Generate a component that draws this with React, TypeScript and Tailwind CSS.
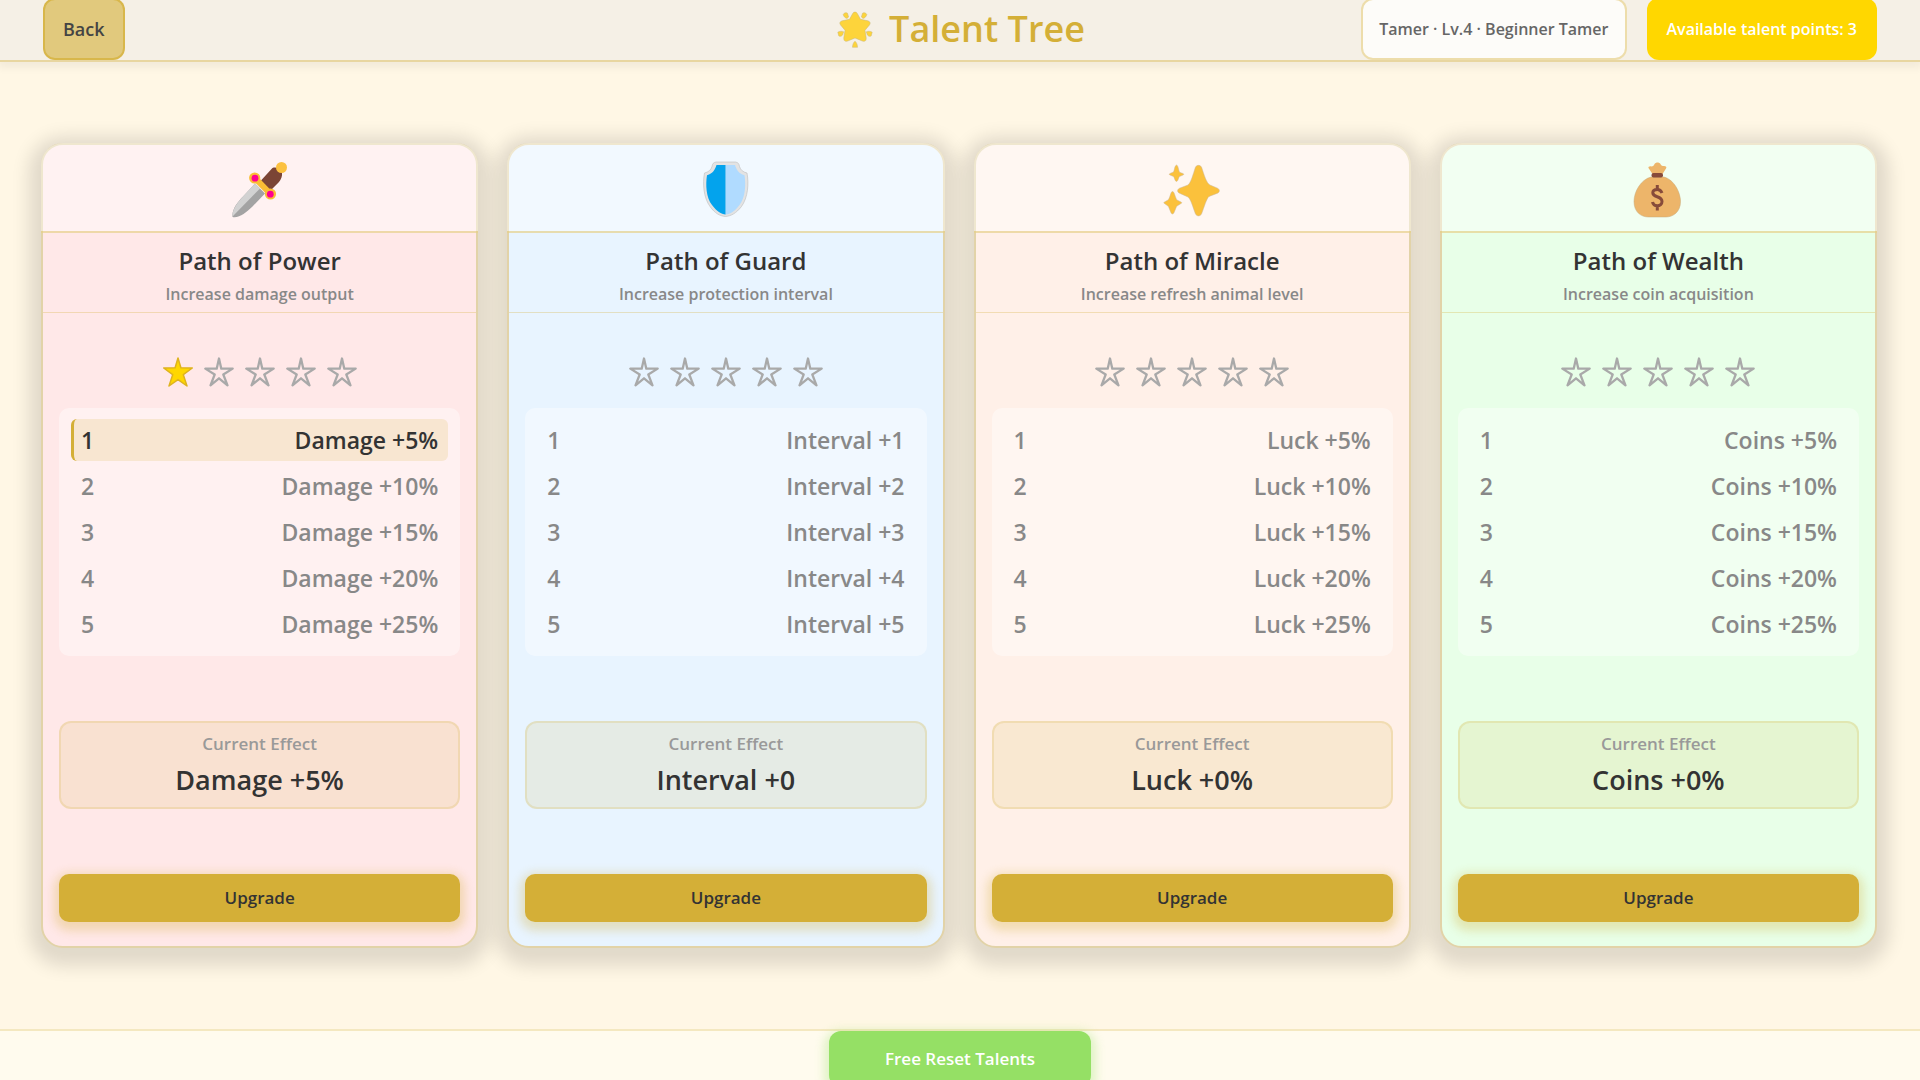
import type { ReactNode } from "react";

type Path = {
  name: string;
  desc: string;
  color: string;
  icon: ReactNode;
  level: number;
  levels: string[];
  effect: string;
};

const DaggerIcon = () => (
  <svg viewBox="1 -1 100 85" className="w-[100px] h-[86px]" aria-hidden="true">
    <path d="M23.500 71.500C22.500 64 29 56 34 51L46 38L56 48L43.500 61C37 67 30 73 23.500 71.500Z" fill="#a3a3a3" />
    <path d="M23.500 71C23 64 29 56.500 34 51L46 38L51 43Z" fill="#d2d2d2" />
    <path d="M52 35L62.500 23.500C65 20.500 71 22.500 73 27C73.500 31 72 34 70 36.500L60 46.500Z" fill="#7b4535" />
    <path d="M46 32.500L61.500 48.500" stroke="#f9bd35" strokeWidth="6" />
    <circle cx="45.700" cy="32.500" r="5.600" fill="#f9bd35" />
    <circle cx="61.500" cy="48.500" r="5.600" fill="#f9bd35" />
    <circle cx="46" cy="32.700" r="3.400" fill="#ff0090" />
    <circle cx="61.300" cy="48.700" r="3.400" fill="#ff0090" />
    <circle cx="72.500" cy="22" r="5.500" fill="#fcc140" />
  </svg>
);

const ShieldIcon = () => (
  <svg viewBox="-3 -1 100 85" className="w-[100px] h-[86px]" aria-hidden="true">
    <path
      d="M37 16.500H56.500C59 17 60 18 60.500 21C61.500 24.500 64 26.500 68 27.500C70 38 69 52 62.500 61C57 68 52 70.500 46.500 71C41 70.500 36 68 31 61C24.500 52 23.500 38 25.500 27.500C29.500 26.500 32 24.500 33 21C33.500 18 34.500 17 37 16.500Z"
      fill="#e3e3e3"
      stroke="#bdbdbd"
      strokeWidth=".6"
    />
    <path d="M46.700 19.500H37.500C36 24 34 28 28 29.800C26.500 39 27 52 33 59.500C38 66 42 68.500 46.700 69Z" fill="#03a3ed" />
    <path d="M46.700 19.500H56C57.500 24 59.500 28 65.500 29.800C67 39 66.500 52 60.500 59.500C55.500 66 51.500 68.500 46.700 69Z" fill="#b0dbff" />
  </svg>
);

const SparklesIcon = () => (
  <svg viewBox="3 -1 100 85" className="w-[100px] h-[86px]" fill="#fbc13c" stroke="#c9b79a" strokeWidth=".5" aria-hidden="true">
    <path d="M56.500 21.500C58 19.300 61 19.300 62.500 21.500C65 29 67.500 38 71 39.500L78.500 42.700C81 44 81 46.500 78.500 47.700L70 51C67.500 53 65 62 62.500 68.500C61 71 58 71 56.500 68.500C54 62 52 54 49 51.500L40.500 47.700C38 46.500 38 44 40.500 42.700L49 39.500C52 37 54 29 56.500 21.500Z" />
    <path d="M37.500 19.500C39.500 20 39.500 26 41 27L44 28C45 28.500 45 29 44 29.500L40.500 31C39.500 32 39 36 37.500 36C36 36 35.500 32 34.500 31L31 29.500C30 29 30 28.500 31 28L34.500 26.500C35.500 25 35.500 20 37.500 19.500Z" />
    <path d="M33.500 46C35.500 46 36.500 53 38 54.500L42 56.500C43 57 43 57.500 42 58L38 60.500C36.500 62 35.500 68.500 33.500 68.500C31.500 68.500 30.500 62 29 60.500L25.500 58C24.500 57.500 24.500 57 25.500 56.500L29 54.500C31 53 31.500 46 33.500 46Z" />
  </svg>
);

const MoneyBagIcon = () => (
  <svg viewBox="-1 -1 100 85" className="w-[100px] h-[86px]" aria-hidden="true">
    <path d="M43.500 28.500L39.500 22.500C39 21.500 40.500 20.500 42.500 21C44 21 45 20 45.500 18.500C47 16.500 50 16.500 51.500 18.500C52 20 53 20.500 55 20.500C57 20.500 58 21.500 57 23L53.500 28.500Z" fill="#edb56a" />
    <path d="M42 31.500H55C65 34 71.500 47 71.500 56C71.500 66.500 64 71.500 57 71.500H39.500C32 71.500 25 66.500 25 56C25 46 32 34 42 31.500Z" fill="#edb56a" stroke="#c6a878" strokeWidth=".5" />
    <rect x="42.500" y="27.500" width="11.500" height="4.500" rx="2" fill="#874b3a" />
    <path d="M53 47.500C52 45 50.500 44 48.300 44C45.500 44 43.800 45.300 43.800 47.300C43.800 52.500 53 50 53 56C53 58.500 51 60.300 48.300 60.300C45.500 60.300 44 59 43.500 56.500M48.300 39.500V44M48.300 60.300V65" fill="none" stroke="#874b3a" strokeWidth="3" />
  </svg>
);

const GlowingStarIcon = () => (
  <svg viewBox="0 0 40 40" className="w-10 h-10" fill="#fdd43b" stroke="#c9b778" strokeWidth=".5" strokeLinejoin="round" aria-hidden="true">
    <path d="M17.800 4.300C18.800 2.600 21.200 2.600 22.200 4.300L25.500 10.300L32.800 11.800C35.200 12.400 35.800 14.200 34.500 15.900L30 21.300L31.200 28.800C31.400 31.900 29.800 33 27.300 32L20 29L12.700 32C10.200 33 8.600 31.900 8.800 28.800L10 21.300L5.500 15.900C4.200 14.200 4.800 12.400 7.200 11.800L14.500 10.300Z" />
    <path d="M8.200 5.500C9 3.800 11 3.300 12.500 4.200L13.600 8L12 9.400C10 9 8.600 7.400 8.200 5.500Z" />
    <path d="M31.800 5.500C31 3.800 29 3.300 27.500 4.200L26.400 8L28 9.400C30 9 31.400 7.400 31.800 5.500Z" />
    <path d="M2.800 23.200C4.500 22 7 22 8.700 22.800L7.600 26C6.600 27.300 4.900 27.700 3.800 26.900Z" />
    <path d="M37.200 23.200C35.500 22 33 22 31.300 22.800L32.400 26C33.400 27.300 35.100 27.700 36.200 26.900Z" />
    <path d="M20 32.200C21.500 33.500 22.500 35.500 22.500 38.300H17.500C17.500 35.500 18.500 33.500 20 32.200Z" />
  </svg>
);

const Star = ({ filled }: { filled: boolean }) => (
  <svg viewBox="0 0 32 32" className="w-8 h-8" aria-hidden="true">
    <path
      d={
        filled
          ? "M16 2L18.900 11.800L30.300 12L21.300 18.700L25 30L16 23.600L7 30L10.700 18.700L1.700 12L13.100 11.800Z"
          : "M16 2.500L18.300 12.700L29.700 12.600L20.300 18.500L24.500 29.300L16 22.300L7.500 29.300L11.700 18.500L2.300 12.600L13.700 12.700Z"
      }
      fill={filled ? "#ffd700" : "none"}
      stroke={filled ? "#deb31f" : "#a9a9a9"}
      strokeWidth={filled ? 1.5 : 2.3}
      strokeLinejoin="round"
    />
  </svg>
);

const paths: Path[] = [
  {
    name: "Path of Power",
    desc: "Increase damage output",
    color: "bg-[#ffe8e8]",
    icon: <DaggerIcon />,
    level: 1,
    levels: ["Damage +5%", "Damage +10%", "Damage +15%", "Damage +20%", "Damage +25%"],
    effect: "Damage +5%",
  },
  {
    name: "Path of Guard",
    desc: "Increase protection interval",
    color: "bg-[#e8f4ff]",
    icon: <ShieldIcon />,
    level: 0,
    levels: ["Interval +1", "Interval +2", "Interval +3", "Interval +4", "Interval +5"],
    effect: "Interval +0",
  },
  {
    name: "Path of Miracle",
    desc: "Increase refresh animal level",
    color: "bg-[#fff0e8]",
    icon: <SparklesIcon />,
    level: 0,
    levels: ["Luck +5%", "Luck +10%", "Luck +15%", "Luck +20%", "Luck +25%"],
    effect: "Luck +0%",
  },
  {
    name: "Path of Wealth",
    desc: "Increase coin acquisition",
    color: "bg-[#e8ffe8]",
    icon: <MoneyBagIcon />,
    level: 0,
    levels: ["Coins +5%", "Coins +10%", "Coins +15%", "Coins +20%", "Coins +25%"],
    effect: "Coins +0%",
  },
];

const TalentCard = ({ path }: { path: Path }) => (
  <section
    className={`flex-1 flex flex-col rounded-[22px] border-2 border-[#e2d3a8] shadow-[0_6px_18px_12px_rgba(0,0,0,0.12)] ${path.color}`}
  >
    <div className="-mx-0.5 -mt-0.5 h-[90px] flex items-center justify-center rounded-t-[22px] bg-white/45 border-b-2 border-[#d4af37]/40">
      {path.icon}
    </div>
    <div className="pt-3 pb-1.5 flex flex-col items-center border-b border-[#d4af37]/30">
      <h2 className="text-2xl leading-8 text-[#333]">{path.name}</h2>
      <p className="mt-[5px] text-base leading-6 text-[#888]">{path.desc}</p>
    </div>
    <div className="px-4 pt-[43px] pb-6 flex flex-col gap-[65px]">
      <div className="flex flex-col gap-5">
        <div className="flex justify-center gap-[9px]">
          {path.levels.map((level, i) => (
            <Star key={level} filled={i < path.level} />
          ))}
        </div>
        <ol className="rounded-[10px] bg-white/40 px-3 py-[11px] flex flex-col gap-1">
          {path.levels.map((level, i) => (
            <li
              key={level}
              className={`h-[42px] pl-[7px] pr-[10px] flex items-center justify-between rounded-md border-l-3 text-[23px] ${
                i < path.level ? "border-[#d4af37] bg-[#d4af37]/17 text-[#333]" : "border-transparent text-[#888]"
              }`}
            >
              <span>{i + 1}</span>
              <span>{level}</span>
            </li>
          ))}
        </ol>
      </div>
      <div className="h-[88px] flex flex-col items-center justify-center rounded-xl border-2 border-[#d4af37]/20 bg-[#d4af37]/13">
        <div className="text-[17px] leading-6 text-[#999]">Current Effect</div>
        <div className="mt-1.5 text-[27px] leading-9 text-[#333]">{path.effect}</div>
      </div>
      <button className="h-12 rounded-[10px] bg-[#d4af37] text-[17px] text-[#333] shadow-[0_4px_10px_5px_rgba(212,175,55,0.3)]">
        Upgrade
      </button>
    </div>
  </section>
);

export default function App() {
  return (
    <div className="h-screen overflow-hidden flex flex-col bg-[#fff7e5] font-['Open_Sans',sans-serif] font-semibold">
      <header className="h-[62px] shrink-0 px-[43px] grid grid-cols-[1fr_auto_1fr] grid-rows-[58px] items-center bg-[#f5f0e6] border-b-2 border-[#d4af37]/40 shadow-[0_4px_8px_2px_rgba(0,0,0,0.05)]">
        <button className="h-[62px] px-[18px] justify-self-start rounded-xl border-2 border-[#d4af37]/70 bg-[#d4af37]/60 text-lg text-[#444]">
          Back
        </button>
        <h1 className="flex items-center gap-[14px] text-4xl text-[#d4af37]">
          <GlowingStarIcon />
          Talent Tree
        </h1>
        <div className="flex items-center justify-end gap-5 text-base">
          <div className="h-[62px] px-4 flex items-center rounded-xl border-2 border-[#d4af37]/40 bg-[#fdfcf9] text-[#666]">
            Tamer · Lv.4 · Beginner Tamer
          </div>
          <div className="h-[62px] px-5 flex items-center rounded-xl bg-[#ffd700] text-white">
            Available talent points: 3
          </div>
        </div>
      </header>
      <main className="flex-1 pl-[41px] pr-[43px] flex items-center gap-[29px]">
        {paths.map((path) => (
          <TalentCard key={path.name} path={path} />
        ))}
      </main>
      <footer className="h-[51px] shrink-0 flex items-start justify-center bg-[#fffbee] border-t-2 border-[#d4af37]/25">
        <button className="h-14 shrink-0 px-14 rounded-xl bg-[#95e065] text-[17px] text-white shadow-[0_4px_10px_5px_rgba(149,224,101,0.3)]">
          Free Reset Talents
        </button>
      </footer>
    </div>
  );
}
